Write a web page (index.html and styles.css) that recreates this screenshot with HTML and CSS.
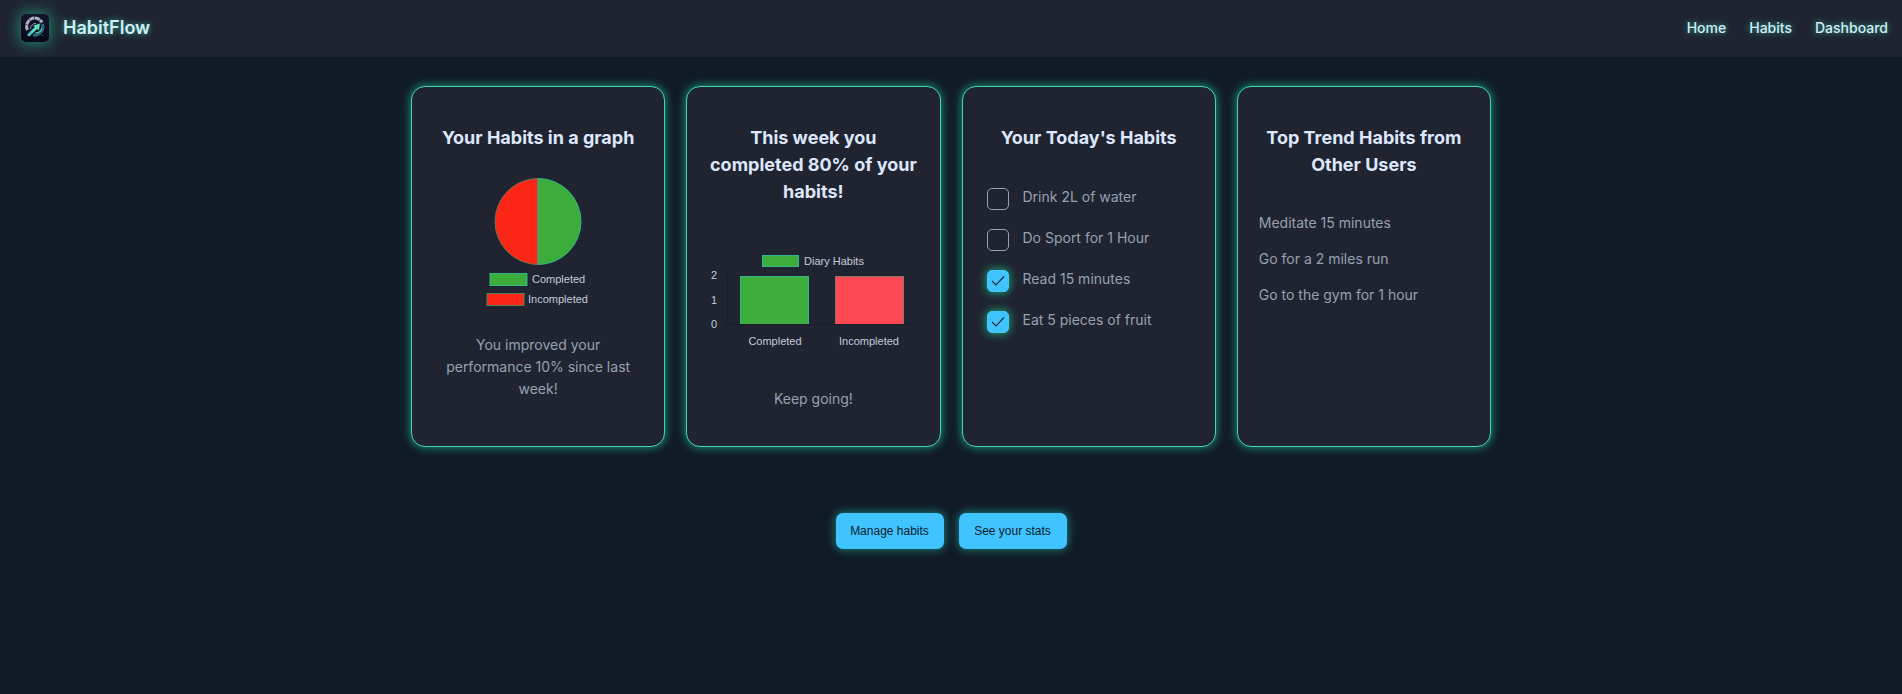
FILE: index.html
```html
<!DOCTYPE html>
<html lang="en">
<head>
<meta charset="utf-8">
<meta name="viewport" content="width=device-width, initial-scale=1">
<title>HabitFlow</title>
<link rel="stylesheet" href="styles.css">
</head>
<body>
<header class="header">
  <a class="brand" href="#">
    <svg class="logo" viewBox="0 0 28 28" aria-hidden="true">
      <defs>
        <linearGradient id="arrow" x1="0" y1="1" x2="1" y2="0"><stop offset="0" stop-color="#3c9fc0"/><stop offset=".5" stop-color="#5fe3c0"/><stop offset="1" stop-color="#5fe3c0"/></linearGradient>
        <linearGradient id="tile" x1="0" y1="0" x2="0" y2="1"><stop offset="0" stop-color="#17132f"/><stop offset="1" stop-color="#070819"/></linearGradient>
      </defs>
      <rect width="28" height="28" rx="5" fill="url(#tile)"/>
      <path d="M6.500 16A8 8 0 0 1 21 8.500" fill="none" stroke="#a9b4c4" stroke-width="3" stroke-dasharray="5 .5"/>
      <path d="M9.500 15A5 5 0 0 1 15 9.500" fill="none" stroke="#8993a9" stroke-width="1"/>
      <path d="M21.500 10A8.500 8.500 0 0 1 12 21" fill="none" stroke="#2b667c" stroke-width="3"/>
      <path d="M21 14A7 7 0 0 1 14 19" fill="none" stroke="#55c5b5" stroke-width="1.200"/>
      <path d="M5.500 21L13.500 13L11.500 11.500L19.500 9L18 17L16.200 15.200L8 23Z" fill="url(#arrow)" stroke="#101631" stroke-width=".6"/>
      <path d="M6 6h1v1H6zM21 6h1v1h-1zM21 21h1v1h-1z" fill="#4a8497"/>
    </svg>
    <span>HabitFlow</span>
  </a>
  <nav class="nav">
    <a href="#">Home</a>
    <a href="#">Habits</a>
    <a href="#">Dashboard</a>
  </nav>
</header>
<main class="main">
  <div class="cards">
    <section class="card">
      <h2>Your Habits in a graph</h2>
      <svg class="chart pie" viewBox="0 0 130 130" role="img" aria-label="Completed and incompleted habits">
        <path d="M65 1.500A43 43 0 0 1 65 87.500Z" fill="#3cac3b" stroke="#34b68f"/>
        <path d="M65 87.500A43 43 0 0 1 65 1.500Z" fill="#fb2615" stroke="#6f7156"/>
        <path d="M65 2V87" stroke="#59ad76"/>
        <rect x="17" y="96.500" width="37" height="12" fill="#3cac3b" stroke="#34b68f"/>
        <text x="59" y="106">Completed</text>
        <rect x="14" y="116.500" width="37" height="12" fill="#fb2615" stroke="#51805a"/>
        <text x="55" y="126">Incompleted</text>
      </svg>
      <p>You improved your performance 10% since last week!</p>
    </section>
    <section class="card">
      <h2>This week you completed 80% of your habits!</h2>
      <svg class="chart bars" viewBox="0 0 210 100" role="img" aria-label="Diary habits">
        <path d="M19.500 25V75M14 74.500H206" fill="none" stroke="#1a1e29"/>
        <rect x="54.500" y="5.500" width="36" height="11" fill="#3cac3b" stroke="#34b68f"/>
        <text x="96" y="15">Diary Habits</text>
        <text x="3" y="29">2</text>
        <text x="3" y="54">1</text>
        <text x="3" y="78">0</text>
        <rect x="32" y="26" width="69" height="48" fill="#3cac3b"/>
        <path d="M32.500 74V26.500H100.500V74" fill="none" stroke="#34b68f"/>
        <rect x="127" y="26" width="69" height="48" fill="#fc4953"/>
        <path d="M127.500 74V26.500H195.500V74" fill="none" stroke="#8b7468"/>
        <text x="67" y="95" text-anchor="middle">Completed</text>
        <text x="161" y="95" text-anchor="middle">Incompleted</text>
      </svg>
      <p>Keep going!</p>
    </section>
    <section class="card">
      <h2>Your Today's Habits</h2>
      <ul class="list checks">
        <li><input type="checkbox" id="water"><label for="water">Drink 2L of water</label></li>
        <li><input type="checkbox" id="sport"><label for="sport">Do Sport for 1 Hour</label></li>
        <li><input type="checkbox" id="read" checked><label for="read">Read 15 minutes</label></li>
        <li><input type="checkbox" id="fruit" checked><label for="fruit">Eat 5 pieces of fruit</label></li>
      </ul>
    </section>
    <section class="card">
      <h2>Top Trend Habits from Other Users</h2>
      <ul class="list trends">
        <li>Meditate 15 minutes</li>
        <li>Go for a 2 miles run</li>
        <li>Go to the gym for 1 hour</li>
      </ul>
    </section>
  </div>
  <div class="actions">
    <button type="button">Manage habits</button>
    <button type="button">See your stats</button>
  </div>
</main>
</body>
</html>
```
FILE: styles.css
```css
* { box-sizing: border-box; }

body {
  margin: 0;
  min-height: 100vh;
  background: #111b27;
  color: #97a1b3;
  font-family: Inter, "Liberation Sans", sans-serif;
  font-size: 14px;
  line-height: 22px;
}

.header {
  display: flex;
  align-items: center;
  justify-content: space-between;
  padding: 14px 14px 15px 21px;
  background: #1f2430;
}

.brand {
  display: flex;
  align-items: center;
  gap: 14px;
  color: #cfeef5;
  font-size: 18px;
  font-weight: 600;
  line-height: 28px;
  text-decoration: none;
  text-shadow: 0 0 6px #34a99a;
}

.logo {
  width: 28px;
  height: 28px;
  border-radius: 5px;
  box-shadow: 0 0 14px 2px #20816f;
}

.nav {
  display: flex;
  gap: 23px;
}

.nav a {
  color: #cfeef5;
  font-weight: 500;
  text-decoration: none;
  text-shadow: 0 0 6px #34a99a;
}

.main { padding: 29px 20px; }

.cards {
  display: grid;
  grid-template-columns: repeat(4, minmax(0, 1fr));
  gap: 21px;
  max-width: 1080px;
  margin: 0 auto;
}

.card {
  display: flex;
  flex-direction: column;
  padding: 37px 21px 36px;
  border: 1px solid #43d6b0;
  border-radius: 14px;
  background: #1f2430;
  box-shadow: 0 0 8px 1px #1a8a6d;
}

.card h2 {
  margin: 0;
  color: #dde6fb;
  font-size: 18px;
  font-weight: 700;
  line-height: 27px;
  text-align: center;
}

.card p {
  margin: 27px 0 0;
  text-align: center;
}

.chart {
  display: block;
  align-self: center;
  fill: #c4cbdd;
  font-family: "Liberation Sans", Arial, sans-serif;
  font-size: 11px;
}

.pie {
  width: 130px;
  margin-top: 26px;
}

.bars {
  width: 100%;
  max-width: 210px;
  margin-top: 45px;
}

.bars + p { margin-top: 38px; }

.list {
  margin: 0;
  padding: 0;
  list-style: none;
}

.checks {
  display: grid;
  gap: 19px;
  margin-top: 37px;
  padding-left: 3px;
}

.checks li {
  display: flex;
  align-items: flex-start;
  gap: 14px;
}

.checks label { line-height: 17px; }

.checks input {
  flex: none;
  width: 22px;
  height: 22px;
  margin: 0;
  border: 1px solid #97a1b3;
  border-radius: 5px;
  appearance: none;
}

.checks input:checked {
  border-color: #46c9f5;
  background: #40c4ff url("data:image/svg+xml,%3Csvg xmlns='http://www.w3.org/2000/svg' viewBox='0 0 20 20'%3E%3Cpath d='M4 10 8 14 16 5.500' fill='none' stroke='%23142836' stroke-width='1.100'/%3E%3C/svg%3E") center / 20px no-repeat;
  box-shadow: 0 0 8px 1px #1d9a78;
}

.trends {
  display: grid;
  gap: 14px;
  margin-top: 34px;
}

.actions {
  display: flex;
  flex-wrap: wrap;
  justify-content: center;
  gap: 15px;
  margin-top: 66px;
}

.actions button {
  min-width: 108px;
  padding: 9px 14px;
  border: 0;
  border-radius: 7px;
  background: #40c4ff;
  box-shadow: 0 0 8px 1px #1c7a76;
  color: #0d1b2a;
  font-family: "Liberation Sans", Arial, sans-serif;
  font-size: 12px;
  line-height: 18px;
}

@media (max-width: 1000px) {
  .cards { grid-template-columns: repeat(2, minmax(0, 1fr)); }
}

@media (max-width: 560px) {
  .cards { grid-template-columns: 1fr; }
}
```
